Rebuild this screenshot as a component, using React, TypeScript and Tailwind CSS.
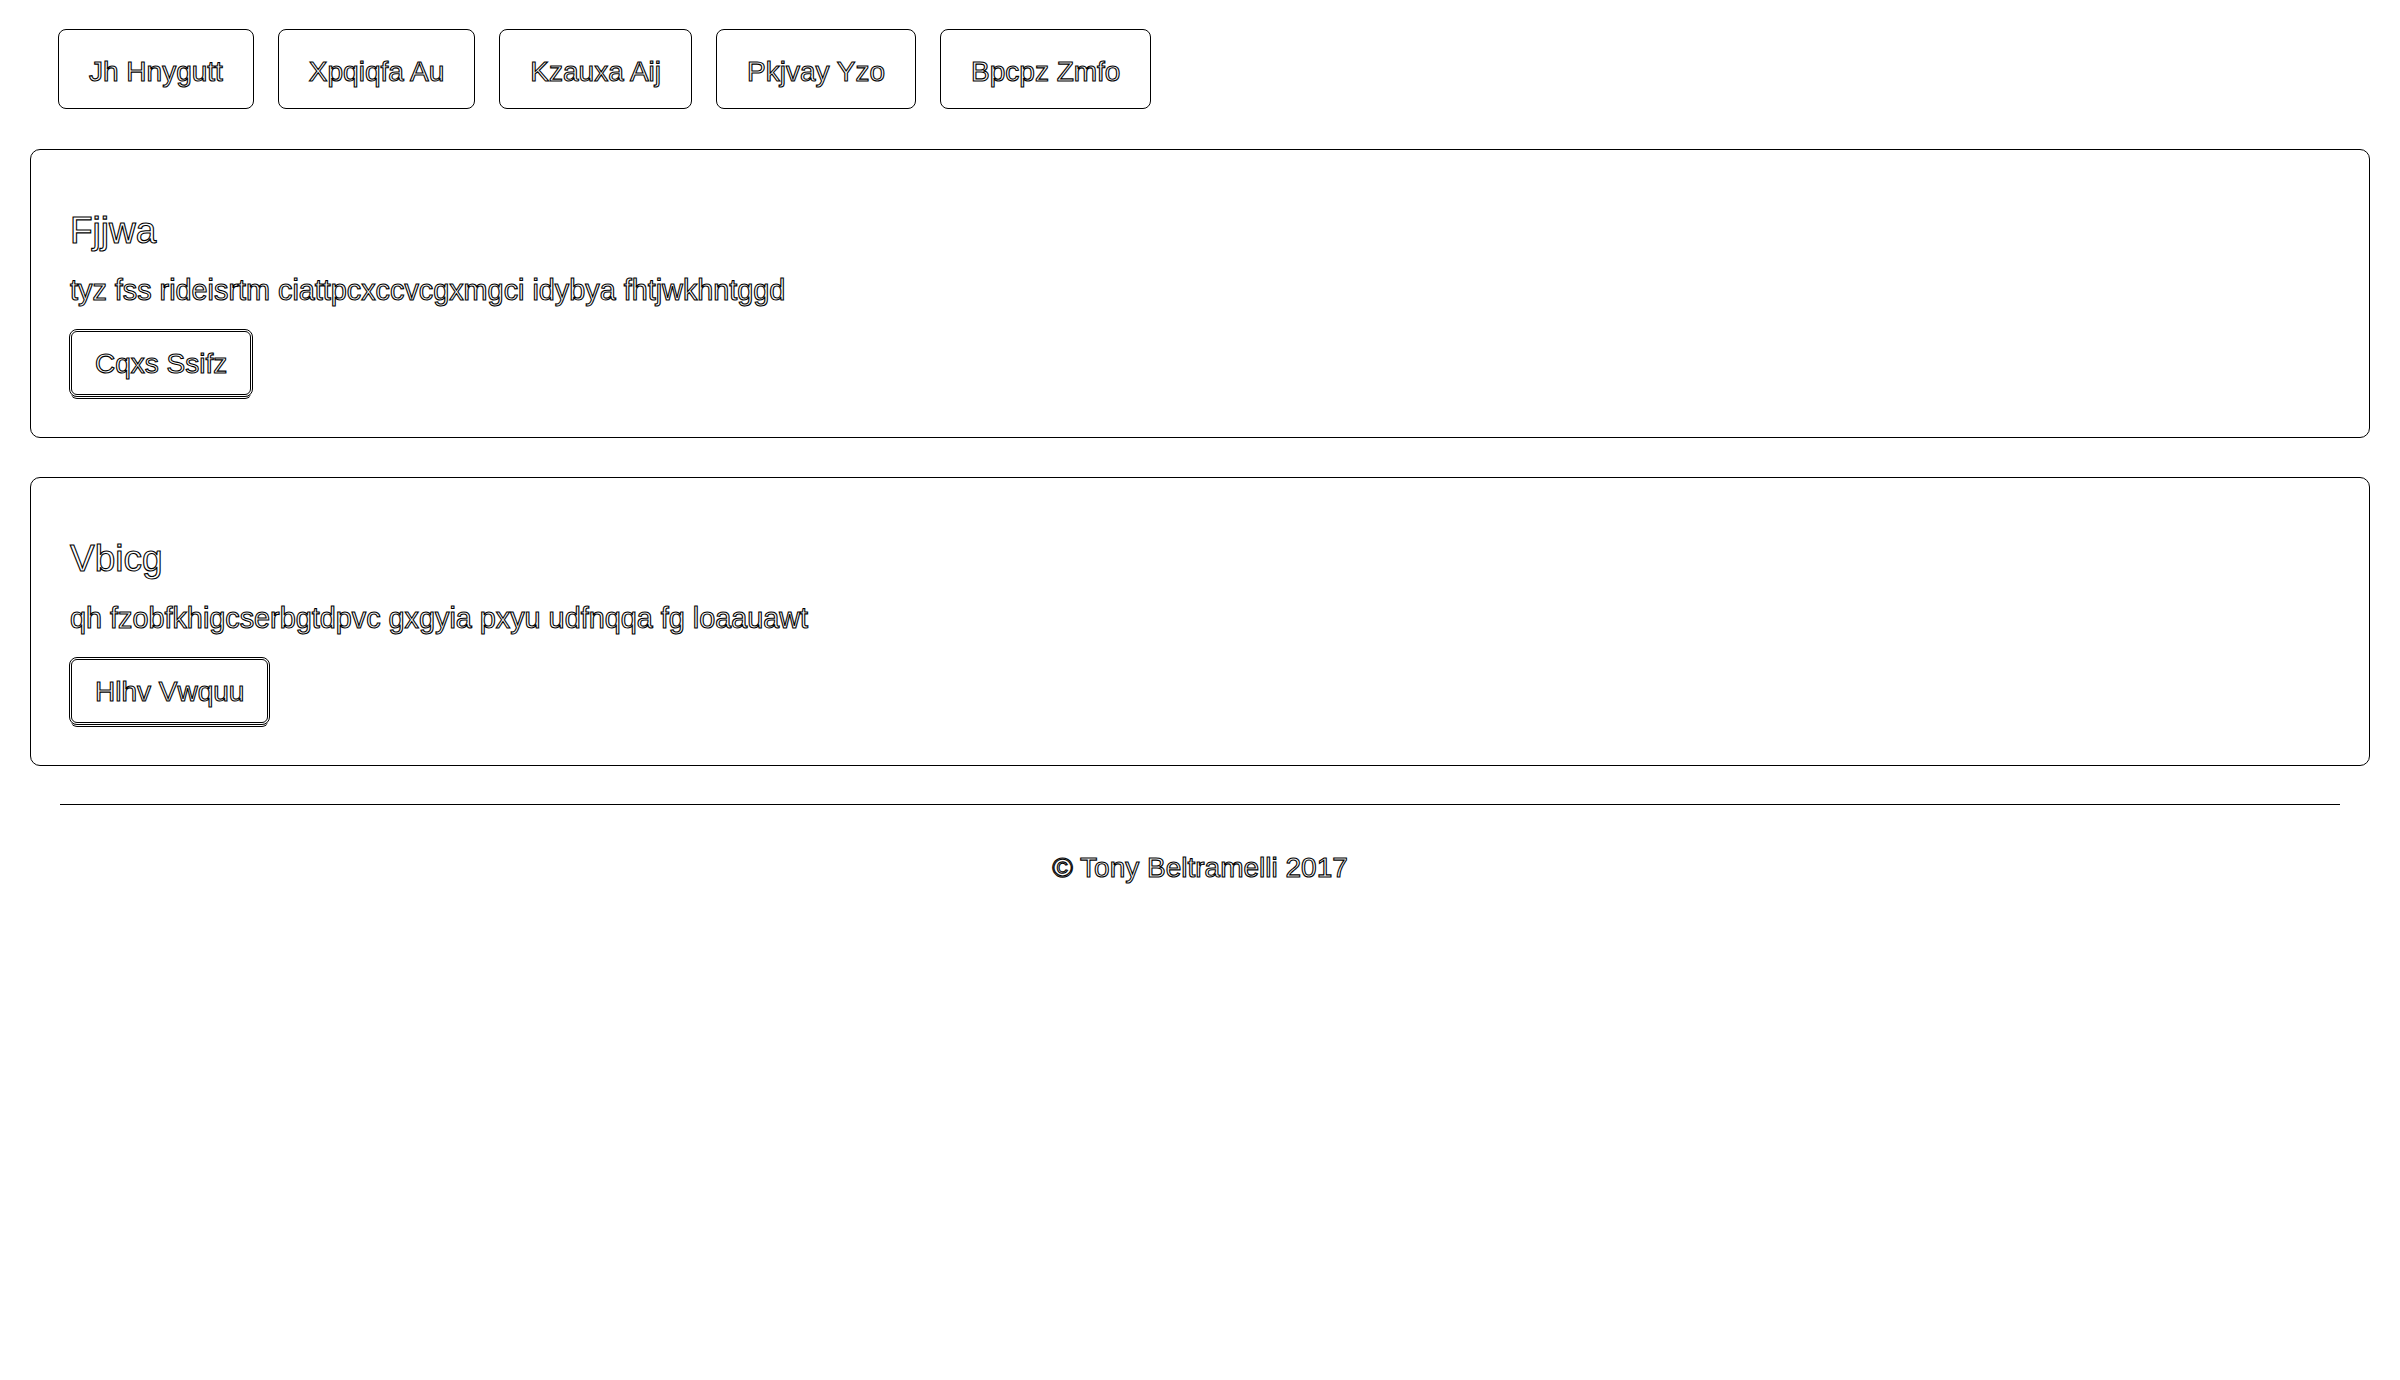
import React from "react";

const outline = "text-transparent [-webkit-text-stroke:1.1px_#000] antialiased";

const navItems = ["Jh Hnygutt", "Xpqiqfa Au", "Kzauxa Aij", "Pkjvay Yzo", "Bpcpz Zmfo"];

const cards = [
  {
    title: "Fjjwa",
    text: "tyz fss rideisrtm ciattpcxccvcgxmgci idybya fhtjwkhntggd",
    button: "Cqxs Ssifz",
  },
  {
    title: "Vbicg",
    text: "qh fzobfkhigcserbgtdpvc gxgyia pxyu udfnqqa fg loaauawt",
    button: "Hlhv Vwquu",
  },
];

export default function App() {
  return (
    <div className="min-h-screen w-full bg-white font-['Liberation_Sans',Arial,sans-serif]">
      <div className="flex gap-[24px] pl-[58px] pt-[29px]">
        {navItems.map((n) => (
          <div
            key={n}
            className="flex h-[80px] items-center rounded-[8px] border border-black px-[30px] pt-[5px]"
          >
            <span className={`text-[28px] leading-[40px] ${outline}`}>{n}</span>
          </div>
        ))}
      </div>

      <div className="mx-[30px] mt-[40px] flex flex-col gap-[39px]">
        {cards.map((c) => (
          <div
            key={c.title}
            className="flex flex-col items-start rounded-[10px] border border-black pb-[40px] pl-[38px] pt-[61px]"
          >
            <h4 className={`ml-[1px] text-[37px] leading-[40px] ${outline}`}>{c.title}</h4>
            <p className={`ml-[1px] mt-[19px] text-[28.8px] leading-[40px] ${outline}`}>{c.text}</p>
            <div className="mt-[19px] rounded-[8px] border-[3px] border-double border-black px-[23px] pb-[10px] pt-[12px] shadow-[0_3px_0_-2px_#fff,0_4px_0_-2px_#000]">
              <span className={`text-[28px] leading-[40px] ${outline}`}>{c.button}</span>
            </div>
          </div>
        ))}
      </div>

      <div className="mx-[60px] mt-[38px] border-t border-black" />
      <div className={`mt-[43px] text-center text-[28px] leading-[40px] ${outline}`}>
        © Tony Beltramelli 2017
      </div>
    </div>
  );
}
